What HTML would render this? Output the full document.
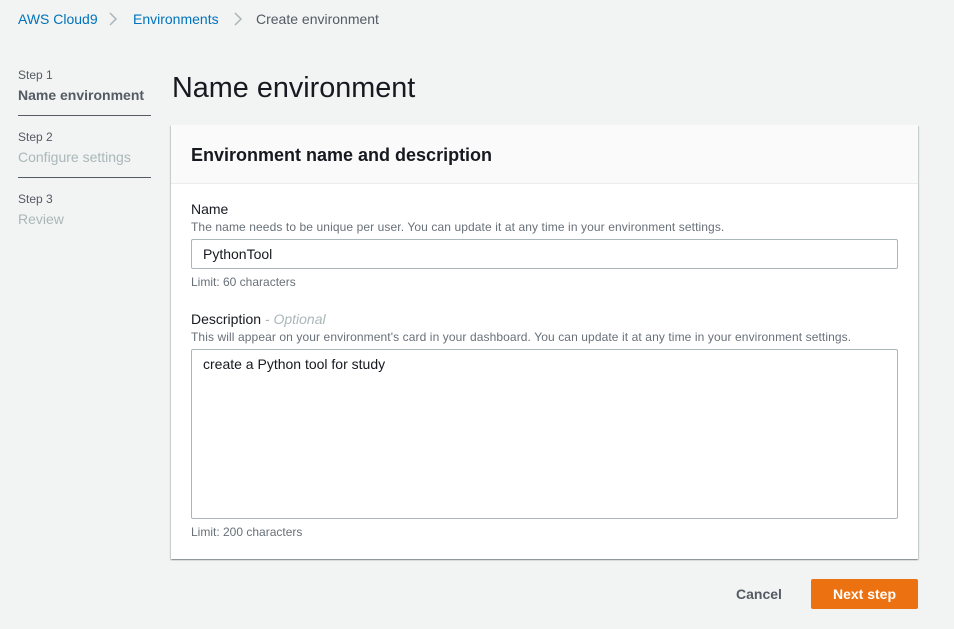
<!DOCTYPE html>
<html><head><meta charset="utf-8"><style>
*{box-sizing:border-box;margin:0;padding:0}
body{width:954px;height:629px;background:#f2f3f3;font-family:"Liberation Sans",sans-serif;color:#16191f;position:relative;overflow:hidden}
.a{position:absolute;white-space:nowrap}
.bc{top:11px;font-size:14px;color:#0073bb}
.st{left:18px;font-size:12px;color:#545b64}
.sn{left:18px;font-size:14px}
.hr{position:absolute;left:18px;width:133px;height:1px;background:#545b64}
.card{position:absolute;left:171px;top:125px;width:747px;height:434px;background:#fff;box-shadow:0 1px 1px rgba(0,28,36,.3),1px 1px 1px rgba(0,28,36,.15),-1px 1px 1px rgba(0,28,36,.15)}
.ch{height:59px;background:#fafafa;border-bottom:1px solid #eaeded}
.inp{position:absolute;left:20px;width:707px;border:1px solid #aab7b8;border-radius:2px;font-size:14px;padding-left:11px}
.lbl{font-size:14px;left:20px}
.hint{font-size:12px;color:#687078;left:20px}
</style></head><body>
<div class="a bc" style="left:18px">AWS Cloud9</div>
<svg class="a" style="left:108px;top:11px" width="10" height="16"><path d="M2 2l6 6-6 6" fill="none" stroke="#aab7b8" stroke-width="1.5"/></svg>
<div class="a bc" style="left:133px">Environments</div>
<svg class="a" style="left:233px;top:11px" width="10" height="16"><path d="M2 2l6 6-6 6" fill="none" stroke="#aab7b8" stroke-width="1.5"/></svg>
<div class="a bc" style="left:256px;color:#545b64">Create environment</div>

<div class="a st" style="top:68px">Step 1</div>
<div class="a sn" style="top:87px;font-weight:bold;color:#545b64">Name environment</div>
<div class="hr" style="top:115px"></div>
<div class="a st" style="top:130px">Step 2</div>
<div class="a sn" style="top:149px;color:#aab7b8">Configure settings</div>
<div class="hr" style="top:177px"></div>
<div class="a st" style="top:192px">Step 3</div>
<div class="a sn" style="top:211px;color:#aab7b8">Review</div>

<div class="a" style="left:172px;top:72px;font-size:28.8px">Name environment</div>

<div class="card">
<div class="ch"></div>
<div class="a" style="left:20px;top:20px;font-size:18px;font-weight:bold">Environment name and description</div>
<div class="a lbl" style="top:76px">Name</div>
<div class="a hint" style="top:95px;letter-spacing:0.1px">The name needs to be unique per user. You can update it at any time in your environment settings.</div>
<div class="inp" style="top:114px;height:30px;line-height:28px">PythonTool</div>
<div class="a hint" style="top:150px">Limit: 60 characters</div>
<div class="a lbl" style="top:186px">Description <i style="color:#aab7b8">- Optional</i></div>
<div class="a hint" style="top:205px;letter-spacing:0.1px">This will appear on your environment's card in your dashboard. You can update it at any time in your environment settings.</div>
<div class="inp" style="top:224px;height:170px;padding-top:6px">create a Python tool for study</div>
<div class="a hint" style="top:400px">Limit: 200 characters</div>
</div>

<div class="a" style="left:736px;top:586px;font-size:14px;font-weight:bold;color:#545b64">Cancel</div>
<div class="a" style="left:811px;top:579px;width:107px;height:30px;background:#ec7211;border-radius:2px;color:#fff;font-size:14px;font-weight:bold;text-align:center;line-height:30px">Next step</div>
</body></html>
